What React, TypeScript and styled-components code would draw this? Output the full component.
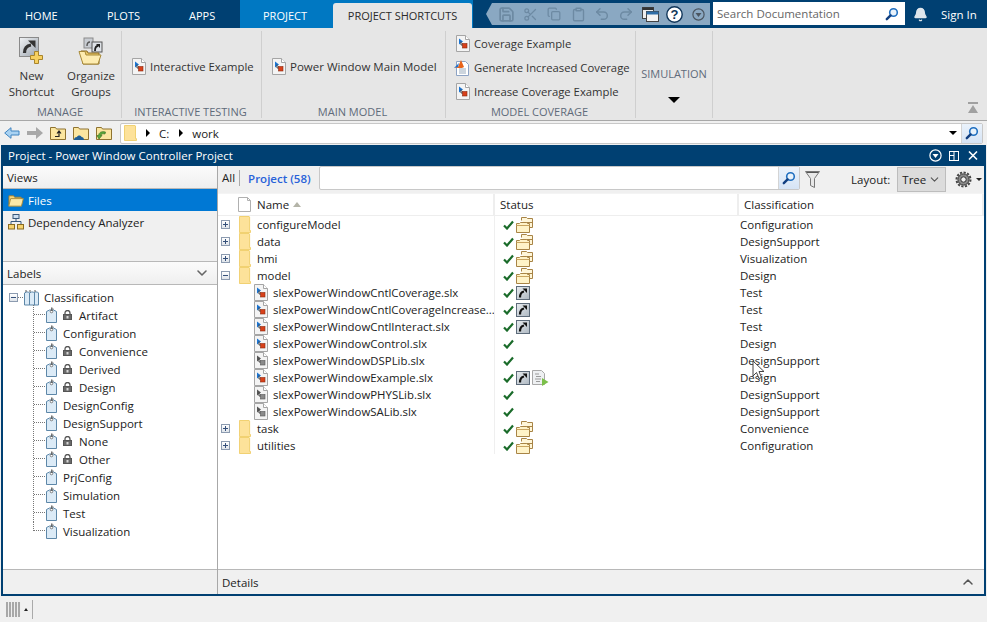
import React from "react";
import styled, { createGlobalStyle } from "styled-components";
import { Save, Scissors, Copy, Clipboard, Undo2, Redo2, Bell, ChevronDown, ChevronUp } from "lucide-react";

const Global = createGlobalStyle`
  html, body { margin: 0; padding: 0; width: 987px; height: 622px; overflow: hidden; background: #f0f0f0; }
  * { box-sizing: border-box; }
  body { font-family: "Open Sans", "Noto Sans", "Liberation Sans", sans-serif; font-size: 11.5px; color: #1c1c1c; }
`;

const Page = styled.div`
  position: relative; width: 987px; height: 622px; display: flex; flex-direction: column; overflow: hidden;
`;
const TopBar = styled.div`
  height: 28px; background: #004072; display: flex; align-items: stretch; padding-left: 1px; flex: none;
`;
const Tab = styled.div<{ $w: number; $pl: number }>`
  width: ${p => p.$w}px; padding: 8px 0 0 ${p => p.$pl}px; color: #fff; font-size: 11px; white-space: nowrap;
`;
const ContextTabs = styled.div`
  width: 233px; background: #0078c2; display: flex; align-items: flex-end; margin-right: 13px;
`;
const ContextLabel = styled.div`
  width: 93px; padding: 0 0 5px 23px; color: #fff; font-size: 11px;
`;
const ActiveTab = styled.div`
  width: 139px; height: 25px; background: #e6e6e6; border-radius: 3px 3px 0 0; color: #2a2a2a; font-size: 11px;
  display: flex; align-items: center; justify-content: center; white-space: nowrap;
`;
const Quick = styled.div`
  width: 224px; height: 22px; margin-top: 3px; background: #8aa8c2; display: flex; align-items: center;
  clip-path: polygon(6px 0, 100% 0, 100% 100%, 6px 100%, 0 50%); padding-left: 8px;
`;
const QuickSlot = styled.div`
  width: 24px; display: flex; justify-content: center; align-items: center; color: #6d8aa3; flex: none;
`;
const DocSearch = styled.div`
  width: 192px; height: 23px; margin: 2px 0 0 3px; background: #fff; display: flex; align-items: center;
  justify-content: space-between; padding: 0 6px 0 4px; color: #666;
`;
const BellSlot = styled.div`
  width: 31px; display: flex; justify-content: center; align-items: center; color: #dfe6ec;
`;
const SignIn = styled.div`
  color: #fff; padding: 7px 0 0 5px; white-space: nowrap;
`;
const Ribbon = styled.div`
  height: 93px; flex: none; background: #e6e6e6; border-bottom: 1px solid #a8a8a8; display: flex; padding: 3px 0 0 1px; position: relative;
`;
const Section = styled.div<{ $w: number }>`
  width: ${p => p.$w}px; height: 87px; border-right: 1px solid #cfcfcf; display: flex; flex-direction: column; flex: none;
`;
const SectionBody = styled.div`
  height: 73px; display: flex; flex: none;
`;
const SectionLabel = styled.div`
  height: 14px; text-align: center; color: #5f6b7a; font-size: 11px; line-height: 16px; white-space: nowrap; padding-right: 2px;
`;
const BigButton = styled.div<{ $w: number }>`
  width: ${p => p.$w}px; display: flex; flex-direction: column; align-items: center; text-align: center; line-height: 16px;
  padding-top: 6px; color: #333;
  svg { margin-bottom: 3px; flex: none; }
`;
const SideButton = styled.div`
  display: flex; align-items: center; gap: 4px; height: 24px; white-space: nowrap; color: #333; font-size: 11.3px;
`;
const MidButtonWrap = styled.div`
  display: flex; align-items: center; padding: 0 0 2px 10px;
`;
const ThreeStack = styled.div`
  display: flex; flex-direction: column; padding: 0 0 0 10px;
`;
const PowerLabel = styled.span`
  font-size: 11.5px;
`;
const SimBody = styled.div`
  height: 87px; display: flex; flex-direction: column; align-items: center; color: #5f6b7a; font-size: 11px; padding-top: 35px;
`;
const SimCaret = styled.div`
  margin-top: 16px; width: 0; height: 0; border-left: 6px solid transparent; border-right: 6px solid transparent; border-top: 6px solid #000;
`;
const Collapse = styled.div`
  position: absolute; right: 8px; bottom: 6px; display: flex; flex-direction: column; align-items: center;
`;
const AddressBar = styled.div`
  height: 24px; flex: none; background: #f0f0f0; display: flex; align-items: center; padding-left: 4px;
`;
const NavSlot = styled.div`
  width: 23px; display: flex; align-items: center;
`;
const AddressField = styled.div`
  width: 863px; height: 21px; margin-left: 1px; background: #fff; border: 1px solid #c8c8c8; border-radius: 2px; display: flex; align-items: center; padding-left: 3px; position: relative;
`;
const Crumb = styled.span`
  white-space: nowrap; color: #222; padding-right: 1px;
`;
const CrumbCaret = styled.span`
  width: 0; height: 0; border-top: 4px solid transparent; border-bottom: 4px solid transparent; border-left: 4px solid #000; margin: 0 9px;
`;
const AddrRight = styled.div`
  margin-left: auto; display: flex; align-items: center; height: 100%;
`;
const DownCaret = styled.span`
  width: 0; height: 0; border-left: 4px solid transparent; border-right: 4px solid transparent; border-top: 4px solid #000; margin-right: 4px;
`;
const SearchBtn = styled.div`
  width: 21px; height: 100%; background: linear-gradient(#eaf2fb, #d6e4f5); border-left: 1px solid #d4d4d4; display: flex; align-items: center; justify-content: center;
`;
const Window = styled.div`
  flex: 1; display: flex; flex-direction: column; background: #004072; padding: 0 2px 2px 2px; margin: 0 1px 0 1px; min-height: 0;
`;
const TitleBar = styled.div`
  height: 21px; flex: none; display: flex; align-items: center; color: #fff; padding-left: 5px; white-space: nowrap;
`;
const TitleIcons = styled.div`
  margin-left: auto; display: flex; align-items: center; gap: 5px; padding-right: 4px;
`;
const Panes = styled.div`
  flex: 1; display: grid; grid-template-columns: 215px 1fr; min-height: 0; background: #fff;
`;
const LeftPane = styled.div`
  border-right: 1px solid #a8a8a8; display: flex; flex-direction: column; min-height: 0;
`;
const PaneHead = styled.div`
  height: 23px; flex: none; padding: 0 7px 0 4px; display: flex; align-items: center; justify-content: space-between;
  background: linear-gradient(#fbfbfb, #efefef); border-bottom: 1px solid #b8b8b8; color: #222;
`;
const ViewList = styled.div`
  height: 73px; flex: none; background: #f0f0f0; border-bottom: 1px solid #b8b8b8;
`;
const ViewRow = styled.div<{ $sel?: boolean }>`
  height: 22px; display: flex; align-items: center; gap: 4px; padding-left: 5px;
  background: ${p => (p.$sel ? "#0078d4" : "transparent")}; color: ${p => (p.$sel ? "#fff" : "#222")};
`;
const LabelTree = styled.div`
  flex: 1; background: #fff; padding-top: 3px; min-height: 0;
`;
const TreeRoot = styled.div`
  height: 18px; display: flex; align-items: center; padding-left: 6px; color: #222;
`;
const RootLine = styled.span`
  width: 5px; border-top: 1px dotted #777;
`;
const TreeLeaf = styled.div<{ $last?: boolean }>`
  height: 18px; display: flex; align-items: center; padding-left: 43px; position: relative; color: #222;
  &::before { content: ""; position: absolute; left: 30px; top: -1px; height: ${p => (p.$last ? "10px" : "19px")}; border-left: 1px dotted #777; }
  &::after { content: ""; position: absolute; left: 31px; top: 8px; width: 11px; border-top: 1px dotted #777; }
`;
const LeafText = styled.span<{ $ml?: number }>`
  margin-left: ${p => p.$ml ?? 6}px;
`;
const LockSlot = styled.span`
  display: flex; margin: 0 1px 0 6px;
`;
const LeftFoot = styled.div`
  height: 25px; flex: none; background: #f0f0f0; border-top: 1px solid #b8b8b8;
`;
const RightPane = styled.div`
  display: flex; flex-direction: column; min-height: 0; position: relative; min-width: 0;
`;
const FilterBar = styled.div`
  height: 27px; flex: none; background: #f0f0f0; display: flex; align-items: center; padding: 0 0 3px 4px;
`;
const AllTab = styled.span`
  padding-right: 4px; border-right: 1px solid #aaa; line-height: 16px; color: #222;
`;
const ProjTab = styled.span`
  margin-left: 8px; color: #2962d9; font-weight: 600; white-space: nowrap; width: 71px;
`;
const FilterField = styled.div`
  width: 481px; height: 24px; background: #fff; border: 1px solid #c8c8c8; border-radius: 2px; display: flex; justify-content: flex-end;
`;
const FilterRight = styled.div`
  display: flex; align-items: center; margin-top: 3px;
`;
const FunnelSlot = styled.div`
  margin-left: 5px; display: flex; width: 46px;
`;
const LayoutLabel = styled.span`
  color: #222; white-space: nowrap; margin-right: 7px;
`;
const Select = styled.div`
  width: 49px; height: 25px; background: #dcdcdc; border: 1px solid #bdbdbd; display: flex; align-items: center; justify-content: space-between; padding: 0 4px 0 4px; color: #222;
`;
const GearSlot = styled.div`
  margin-left: 9px; display: flex; align-items: center; gap: 4px;
`;
const MiniCaret = styled.span`
  width: 0; height: 0; border-left: 3px solid transparent; border-right: 3px solid transparent; border-top: 3px solid #222;
`;
const TableHead = styled.div`
  height: 23px; flex: none; display: grid; grid-template-columns: 277px 244px 1fr; background: #fff; border-bottom: 1px solid #eee; border-top: 1px solid #f4f4f4; color: #222;
`;
const HeadCell = styled.div<{ $pl: number }>`
  display: flex; align-items: center; padding-left: ${p => p.$pl}px; border-right: 2px solid #eee; gap: 3px;
`;
const SortUp = styled.span`
  width: 0; height: 0; border-left: 4px solid transparent; border-right: 4px solid transparent; border-bottom: 5px solid #b4b4a8; margin-left: 1px;
`;
const TableBody = styled.div`
  flex: 1; min-height: 0;
`;
const Row = styled.div`
  height: 17px; display: grid; grid-template-columns: 277px 244px 1fr; color: #222; position: relative;
`;
const NameCell = styled.div`
  display: flex; align-items: center; padding-left: 3px; overflow: hidden; white-space: nowrap; border-right: 1px solid #efefef; font-size: 11.4px;
`;
const Expander = styled.span`
  width: 9px; height: 9px; border: 1px solid #8c9bb0; background: linear-gradient(#fff, #dfe4ea); position: relative; flex: none; margin-right: 9px;
  &::before { content: ""; position: absolute; left: 1px; top: 3px; width: 5px; height: 1px; background: #35507a; }
  &[data-open="false"]::after { content: ""; position: absolute; left: 3px; top: 1px; width: 1px; height: 5px; background: #35507a; }
`;
const TreeExpander = styled(Expander)`
  margin-right: 0;
`;
const FolderText = styled.span`
  margin-left: 6px;
`;
const FileIndent = styled.span`
  margin-left: 33px; display: flex; margin-right: 5px;
`;
const StatusCell = styled.div`
  display: flex; align-items: center; padding-left: 8px; gap: 1px;
`;
const ClassCell = styled.div`
  display: flex; align-items: center; padding-left: 1px;
`;
const Details = styled.div`
  height: 25px; flex: none; border-top: 1px solid #b8b8b8; background: #f0f0f0; display: flex; align-items: center; justify-content: space-between; padding: 0 8px 0 4px; color: #222;
`;
const StatusBar = styled.div`
  height: 26px; flex: none; background: #f0f0f0; display: flex; align-items: center; padding-left: 6px;
`;
const Grip = styled.div`
  width: 15px; height: 15px; background: repeating-linear-gradient(90deg, #a8a8a8 0 2px, #eeeeee 2px 3px);
`;
const GripCaret = styled.span`
  width: 0; height: 0; border-left: 2px solid transparent; border-right: 2px solid transparent; border-bottom: 3px solid #222; margin: 0 3px;
`;
const GripSep = styled.span`
  width: 1px; height: 19px; background: #aaa; margin-left: 1px;
`;
const Pointer = styled.svg`
  position: absolute; left: 752px; top: 360px;
`;

const Glass = () => (
  <svg width="14" height="14" viewBox="0 0 14 14">
    <circle cx="8.5" cy="5.5" r="3.8" fill="#e8f2fb" stroke="#1f6fc0" strokeWidth="1.6" />
    <path d="M5.6 8.4 1.8 12.2" stroke="#123f80" strokeWidth="2.4" strokeLinecap="round" />
  </svg>
);
const FlatFolder = ({ w = 13, h = 17 }: { w?: number; h?: number }) => (
  <svg width={w} height={h} viewBox="0 0 13 17" preserveAspectRatio="none" style={{ flex: "none" }}>
    <path d="M.5.5h10.5l.5.5v13.5h1v2H.5z" fill="#fde29a" stroke="#f0cf6e" />
  </svg>
);
const Check = () => (
  <svg width="11" height="10" viewBox="0 0 11 10" style={{ flex: "none" }}>
    <path d="M1 5.5 4 8.5 10 1.5" fill="none" stroke="#1a6b2a" strokeWidth="2.2" />
  </svg>
);
const StatusFolder = () => (
  <svg width="17" height="16" viewBox="0 0 17 16" style={{ flex: "none", marginLeft: 1 }}>
    <path d="M5.5 3.5V.5h5l1 1h5v9h-3" fill="#fff6d8" stroke="#a88446" />
    <path d="M7 5.5h9.5" stroke="#a88446" />
    <path d="M.5 15.5v-9h3l1-1h6l1 1h2v9z" fill="#fff3c8" stroke="#a88446" />
    <path d="M.5 8.5h13" stroke="#c9a560" />
  </svg>
);
const Shortcut = ({ size = 14 }: { size?: number }) => (
  <svg width={size} height={size} viewBox="0 0 14 14" style={{ flex: "none", marginLeft: 1 }}>
    <defs><linearGradient id="sc" x1="0" y1="0" x2="1" y2="1"><stop offset="0" stopColor="#e8ecef" /><stop offset="1" stopColor="#aeb8c2" /></linearGradient></defs>
    <rect x=".5" y=".5" width="13" height="13" fill="url(#sc)" stroke="#5d6b7a" />
    <path d="M4 11.5C4 8 5.5 6 8 5.5" fill="none" stroke="#111" strokeWidth="2.2" />
    <path d="M6.5 2.5H11V7z" fill="#111" />
  </svg>
);
const ModelFile = ({ gray }: { gray?: boolean }) => (
  <svg width="14" height="17" viewBox="0 0 14 17" style={{ flex: "none" }}>
    <path d="M.5.5h9l4 4v12H.5z" fill="#f4f4f4" stroke="#a5a5a5" />
    <path d="M9.5.5v4h4" fill="#fff" stroke="#a5a5a5" />
    <path d="M3 3.5v6l4-3z" fill={gray ? "#555" : "#1a74d2"} />
    <path d="M5 6.5v3.5h2" fill="none" stroke="#444" />
    <rect x="6.5" y="8.5" width="4.5" height="4.5" fill={gray ? "#8a8a8a" : "#d8401a"} stroke={gray ? "#555" : "#8a2a10"} strokeWidth=".6" />
  </svg>
);
const DocGenIcon = () => (
  <svg width="17" height="17" viewBox="0 0 17 17" style={{ flex: "none", margin: "0 -1px 0 -2px" }}>
    <path d="M2.5 2.5h9l3 3v11h-12z" fill="#fff" stroke="#8da3c4" />
    <path d="M5 10h7M5 12h7M5 14h7" stroke="#9ab" />
    <path d="M0 9l4-1 3-7 3 7-2 1z" fill="#e8641a" />
    <path d="M0 9l4-1 1-4z" fill="#1a74d2" />
  </svg>
);
const Tag = () => (
  <svg width="11" height="16" viewBox="0 0 11 16" style={{ flex: "none" }}>
    <path d="M.5 4.5 3.5 3h4l3 1.5v11H.5z" fill="#dcebf7" stroke="#5d87a8" />
    <circle cx="5.5" cy="4.5" r="1.3" fill="#fff" stroke="#555" strokeWidth=".7" />
    <path d="M5.5 4V.7" stroke="#555" strokeWidth=".8" />
    <path d="M5.5.7c2 0 2 2.5.5 3" fill="none" stroke="#555" strokeWidth=".7" />
  </svg>
);
const TagStack = () => (
  <svg width="16" height="17" viewBox="0 0 16 17" style={{ flex: "none" }}>
    {[10, 6, 1].map(x => (
      <path key={x} d={`M${x + .5} 4l2-1h2l1 1v12h-5z`} fill="#dcebf7" stroke="#5d87a8" />
    ))}
    <path d="M3 3V1M7 3V1M12 3V1" stroke="#555" />
  </svg>
);
const Lock = () => (
  <svg width="9" height="10" viewBox="0 0 9 10" style={{ flex: "none" }}>
    <path d="M2 5V3a2.5 2.5 0 0 1 5 0v2" fill="none" stroke="#555" strokeWidth="1.3" />
    <rect x=".5" y="4.5" width="8" height="5" fill="#6a6a6a" stroke="#555" />
    <rect x="3.5" y="6" width="2" height="2.5" fill="#d8d8d8" />
  </svg>
);
const OpenFolderView = () => (
  <svg width="16" height="13" viewBox="0 0 17 13" style={{ flex: "none" }}>
    <path d="M1 12V1.5h5l1 1.5h7v2" fill="#f7d77c" stroke="#9a7a30" />
    <path d="M.8 12.5l2-8h13.5l-2 8z" fill="#fde9a8" stroke="#a88a38" />
  </svg>
);
const Hierarchy = () => (
  <svg width="16" height="16" viewBox="0 0 16 16" style={{ flex: "none" }}>
    <rect x="5" y=".5" width="6" height="4" fill="#cfe0f2" stroke="#39587c" />
    <path d="M8 4.5v3M3 10V7.5h10V10" fill="none" stroke="#39587c" />
    <rect x=".5" y="10.5" width="6" height="4.5" fill="#f6d26e" stroke="#8a6a20" />
    <rect x="9.5" y="10.5" width="6" height="4.5" fill="#f6d26e" stroke="#8a6a20" />
  </svg>
);
const NewShortcutIcon = () => (
  <svg width="26" height="28" viewBox="0 0 26 28">
    <defs><linearGradient id="ns" x1="0" y1="0" x2="1" y2="1"><stop offset="0" stopColor="#f2f4f6" /><stop offset="1" stopColor="#9aa3ad" /></linearGradient></defs>
    <rect x=".5" y=".5" width="19" height="19" fill="url(#ns)" stroke="#8a8a8a" />
    <path d="M5.5 16C5.5 11 8 8.5 12 8" fill="none" stroke="#333" strokeWidth="3.2" />
    <path d="M9 3.5h7.5V11z" fill="#333" />
    <path d="M15.5 14.5h4v4h4v4h-4v4h-4v-4h-4v-4h4z" fill="#f7d060" stroke="#a8842c" />
  </svg>
);
const OrganizeIcon = () => (
  <svg width="26" height="28" viewBox="0 0 26 28">
    <rect x="6" y="1" width="9" height="10" fill="#c8ccd2" stroke="#8a8a8a" />
    <path d="M9 9c0-3 1-4 3-4" fill="none" stroke="#555" strokeWidth="1.4" />
    <rect x="14" y="5" width="10" height="10" fill="#dfe3e8" stroke="#555" />
    <path d="M17 14c0-3 1-5 3-5" fill="none" stroke="#222" strokeWidth="1.8" />
    <path d="M18 7h4v4z" fill="#222" />
    <path d="M3 14h6l1 2h11v11H5z" fill="#e8c868" stroke="#8a6a20" />
    <path d="M1 14.5 5 27h15l3-9H8l-1-3.5z" fill="#fdecb0" stroke="#a88a38" />
  </svg>
);
const BackArrow = ({ gray }: { gray?: boolean }) => (
  <svg width="16" height="12" viewBox="0 0 16 12">
    {gray
      ? <path d="M16 6 9 0v4H0v4h9v4z" fill="#a8a8a8" />
      : <path d="M.7 6 7 .7V4h8v4H7v3.3z" fill="#a9d2f2" stroke="#3f84c0" />}
  </svg>
);
const NavFolder = ({ kind }: { kind: "up" | "cloud" | "green" }) => (
  <svg width="16" height="14" viewBox="0 0 16 14">
    <path d="M.5 13.5V1.5h5l1 1.5h9v10.5z" fill="#fbe6a0" stroke="#8f7330" />
    {kind === "up" && <path d="M5 10.5h4V6M7 7.5 9 5l2 2.5" fill="none" stroke="#222" strokeWidth="1.2" />}
    {kind === "cloud" && <path d="M1 14c0-2 1-3 3-3 .5-2 4-2 4.5 0 1.5 0 2.5 1 2.5 3z" fill="#1f5f96" />}
    {kind === "green" && <path d="M3 13 1 9.5h1.5C3 6 6 5 9.5 6L9 8c-2-.5-4 0-4.5 1.5H6z" fill="#5aa83a" stroke="#2f6a1e" strokeWidth=".6" />}
  </svg>
);
const HelpIcon = () => (
  <svg width="17" height="17" viewBox="0 0 17 17">
    <circle cx="8.5" cy="8.5" r="7.7" fill="#fff" stroke="#10365a" strokeWidth="1.4" />
    <text x="8.5" y="13" textAnchor="middle" fontFamily="Liberation Sans" fontWeight="700" fontSize="13" fill="#10365a">?</text>
  </svg>
);
const WindowsIcon = () => (
  <svg width="17" height="15" viewBox="0 0 17 15">
    <rect x=".5" y=".5" width="11" height="11" fill="#eee" stroke="#444" />
    <rect x=".5" y=".5" width="11" height="2.5" fill="#333" />
    <rect x="4.5" y="4.5" width="12" height="10" fill="#f4f4f4" stroke="#444" />
    <rect x="4.5" y="4.5" width="12" height="3" fill="#2f6ea8" />
  </svg>
);
const CircleDown = ({ c, s = 13 }: { c: string; s?: number }) => (
  <svg width={s} height={s} viewBox="0 0 13 13">
    <circle cx="6.5" cy="6.5" r="5.6" fill="none" stroke={c} strokeWidth="1.2" />
    <path d="M3.5 5h6l-3 4z" fill={c} />
  </svg>
);
const Funnel = () => (
  <svg width="15" height="18" viewBox="0 0 15 18">
    <path d="M.5.5h14l-5 7v9l-4-2V7.5z" fill="#e8e8e8" stroke="#777" />
    <path d="M1.5 1.5h12" stroke="#555" />
  </svg>
);
const Gear = () => (
  <svg width="17" height="17" viewBox="0 0 17 17">
    <circle cx="8.5" cy="8.5" r="5.6" fill="#8a8a8a" stroke="#333" />
    <circle cx="8.5" cy="8.5" r="2.7" fill="#f0f0f0" stroke="#333" />
    <circle cx="8.5" cy="8.5" r="7" fill="none" stroke="#444" strokeWidth="2" strokeDasharray="2.2 1.45" />
  </svg>
);
const DocPlay = () => (
  <svg width="17" height="16" viewBox="0 0 17 16" style={{ flex: "none", marginLeft: 1 }}>
    <path d="M.5.5h9l3 3v11H.5z" fill="#eef0f2" stroke="#a8a8a8" />
    <path d="M3 4h4M4 6.5h5M3 9h6M4 11.5h4" stroke="#9a9a9a" />
    <path d="M10 8l6.5 4-6.5 4z" fill="#7cc04a" />
  </svg>
);

type Item = { name: string; st: string[]; cls: string; gray?: boolean; open?: boolean };
const rows: Item[] = [
  { name: "configureModel", st: ["f"], cls: "Configuration" },
  { name: "data", st: ["f"], cls: "DesignSupport" },
  { name: "hmi", st: ["f"], cls: "Visualization" },
  { name: "model", st: ["f"], cls: "Design", open: true },
  { name: "slexPowerWindowCntlCoverage.slx", st: ["s"], cls: "Test" },
  { name: "slexPowerWindowCntlCoverageIncrease...", st: ["s"], cls: "Test" },
  { name: "slexPowerWindowCntlInteract.slx", st: ["s"], cls: "Test" },
  { name: "slexPowerWindowControl.slx", st: [], cls: "Design" },
  { name: "slexPowerWindowDSPLib.slx", st: [], cls: "DesignSupport", gray: true },
  { name: "slexPowerWindowExample.slx", st: ["s", "d"], cls: "Design" },
  { name: "slexPowerWindowPHYSLib.slx", st: [], cls: "DesignSupport", gray: true },
  { name: "slexPowerWindowSALib.slx", st: [], cls: "DesignSupport", gray: true },
  { name: "task", st: ["f"], cls: "Convenience" },
  { name: "utilities", st: ["f"], cls: "Configuration" },
];
const labels: [string, boolean][] = [
  ["Artifact", true], ["Configuration", false], ["Convenience", true], ["Derived", true], ["Design", true],
  ["DesignConfig", false], ["DesignSupport", false], ["None", true], ["Other", true], ["PrjConfig", false],
  ["Simulation", false], ["Test", false], ["Visualization", false],
];

export default function App() {
  return (
    <Page>
      <Global />
      <TopBar>
        <Tab $w={82} $pl={24}>HOME</Tab>
        <Tab $w={82} $pl={24}>PLOTS</Tab>
        <Tab $w={75} $pl={24}>APPS</Tab>
        <ContextTabs>
          <ContextLabel>PROJECT</ContextLabel>
          <ActiveTab>PROJECT SHORTCUTS</ActiveTab>
        </ContextTabs>
        <Quick>
          <QuickSlot><Save size={17} strokeWidth={2.4} /></QuickSlot>
          <QuickSlot><Scissors size={15} /></QuickSlot>
          <QuickSlot><Copy size={14} strokeWidth={2.2} /></QuickSlot>
          <QuickSlot><Clipboard size={15} strokeWidth={2.2} /></QuickSlot>
          <QuickSlot><Undo2 size={16} strokeWidth={2.2} /></QuickSlot>
          <QuickSlot><Redo2 size={16} strokeWidth={2.2} /></QuickSlot>
          <QuickSlot><WindowsIcon /></QuickSlot>
          <QuickSlot><HelpIcon /></QuickSlot>
          <QuickSlot><CircleDown c="#4a5560" /></QuickSlot>
        </Quick>
        <DocSearch>Search Documentation<Glass /></DocSearch>
        <BellSlot><Bell size={15} fill="#dfe6ec" /></BellSlot>
        <SignIn>Sign In</SignIn>
      </TopBar>
      <Ribbon>
        <Section $w={121}>
          <SectionBody>
            <BigButton $w={61}><NewShortcutIcon />New<br />Shortcut</BigButton>
            <BigButton $w={58}><OrganizeIcon />Organize<br />Groups</BigButton>
          </SectionBody>
          <SectionLabel>MANAGE</SectionLabel>
        </Section>
        <Section $w={140}>
          <SectionBody><MidButtonWrap><SideButton><ModelFile />Interactive Example</SideButton></MidButtonWrap></SectionBody>
          <SectionLabel>INTERACTIVE TESTING</SectionLabel>
        </Section>
        <Section $w={184}>
          <SectionBody><MidButtonWrap><SideButton><ModelFile /><PowerLabel>Power Window Main Model</PowerLabel></SideButton></MidButtonWrap></SectionBody>
          <SectionLabel>MAIN MODEL</SectionLabel>
        </Section>
        <Section $w={190}>
          <SectionBody>
            <ThreeStack>
              <SideButton><ModelFile />Coverage Example</SideButton>
              <SideButton><DocGenIcon />Generate Increased Coverage</SideButton>
              <SideButton><ModelFile />Increase Coverage Example</SideButton>
            </ThreeStack>
          </SectionBody>
          <SectionLabel>MODEL COVERAGE</SectionLabel>
        </Section>
        <Section $w={77}>
          <SimBody>SIMULATION<SimCaret /></SimBody>
        </Section>
        <Collapse>
          <svg width="12" height="12" viewBox="0 0 12 12"><rect x="1" y="0" width="10" height="2" fill="#a0a0a0" /><path d="M6 3 1 11h10z" fill="#a0a0a0" /></svg>
        </Collapse>
      </Ribbon>
      <AddressBar>
        <NavSlot><BackArrow /></NavSlot>
        <NavSlot><BackArrow gray /></NavSlot>
        <NavSlot><NavFolder kind="up" /></NavSlot>
        <NavSlot><NavFolder kind="cloud" /></NavSlot>
        <NavSlot><NavFolder kind="green" /></NavSlot>
        <AddressField>
          <FlatFolder w={13} h={16} />
          <CrumbCaret />
          <Crumb>C:</Crumb>
          <CrumbCaret />
          <Crumb>work</Crumb>
          <AddrRight><DownCaret /><SearchBtn><Glass /></SearchBtn></AddrRight>
        </AddressField>
      </AddressBar>
      <Window>
        <TitleBar>
          Project - Power Window Controller Project
          <TitleIcons>
            <CircleDown c="#fff" />
            <svg width="14" height="12" viewBox="0 0 14 12"><rect x="2.5" y="1.5" width="9" height="9" fill="none" stroke="#fff" /><path d="M7 1.5v9M2.5 5.5H7" stroke="#fff" /></svg>
            <svg width="14" height="12" viewBox="0 0 14 12"><path d="M3 1.5l8 8M11 1.5l-8 8" stroke="#fff" strokeWidth="1.6" /></svg>
          </TitleIcons>
        </TitleBar>
        <Panes>
          <LeftPane>
            <PaneHead>Views</PaneHead>
            <ViewList>
              <ViewRow $sel><OpenFolderView />Files</ViewRow>
              <ViewRow><Hierarchy />Dependency Analyzer</ViewRow>
            </ViewList>
            <PaneHead>Labels<ChevronDown size={16} color="#666" strokeWidth={2.4} /></PaneHead>
            <LabelTree>
              <TreeRoot>
                <TreeExpander data-open="true" />
                <RootLine />
                <TagStack />
                <LeafText $ml={5}>Classification</LeafText>
              </TreeRoot>
              {labels.map(([l, locked], i) => (
                <TreeLeaf key={l} $last={i === labels.length - 1}>
                  <Tag />
                  {locked && <LockSlot><Lock /></LockSlot>}
                  <LeafText>{l}</LeafText>
                </TreeLeaf>
              ))}
            </LabelTree>
            <LeftFoot />
          </LeftPane>
          <RightPane>
            <FilterBar>
              <AllTab>All</AllTab>
              <ProjTab>Project (58)</ProjTab>
              <FilterField><SearchBtn><Glass /></SearchBtn></FilterField>
              <FilterRight>
                <FunnelSlot><Funnel /></FunnelSlot>
                <LayoutLabel>Layout:</LayoutLabel>
                <Select>Tree<ChevronDown size={13} color="#555" /></Select>
                <GearSlot><Gear /><MiniCaret /></GearSlot>
              </FilterRight>
            </FilterBar>
            <TableHead>
              <HeadCell $pl={20}>
                <svg width="13" height="15" viewBox="0 0 13 15" style={{ marginRight: 3 }}><path d="M.5.5h9l3 3v11H.5z" fill="#fff" stroke="#b0b0b0" /><path d="M9.5.5v3h3" fill="none" stroke="#b0b0b0" /></svg>
                Name<SortUp />
              </HeadCell>
              <HeadCell $pl={5}>Status</HeadCell>
              <HeadCell $pl={5}>Classification</HeadCell>
            </TableHead>
            <TableBody>
              {rows.map(r => {
                const isFile = r.name.startsWith("slex");
                return (
                  <Row key={r.name}>
                    <NameCell>
                      {isFile ? (
                        <><FileIndent><ModelFile gray={r.gray} /></FileIndent>{r.name}</>
                      ) : (
                        <>
                          <Expander data-open={r.open ? "true" : "false"} />
                          <FlatFolder w={12} h={17} />
                          <FolderText>{r.name}</FolderText>
                        </>
                      )}
                    </NameCell>
                    <StatusCell>
                      <Check />
                      {r.st.map(s => s === "f" ? <StatusFolder key={s} /> : s === "s" ? <Shortcut key={s} /> : <DocPlay key={s} />)}
                    </StatusCell>
                    <ClassCell>{r.cls}</ClassCell>
                  </Row>
                );
              })}
            </TableBody>
            <Details>Details<ChevronUp size={16} color="#555" strokeWidth={2.2} /></Details>
          </RightPane>
        </Panes>
      </Window>
      <StatusBar>
        <Grip />
        <GripCaret />
        <GripSep />
      </StatusBar>
      <Pointer width="13" height="21" viewBox="0 0 13 21">
        <path d="M1 1v15l3.5-3.5 2.5 6 2.5-1-2.5-6h5z" fill="#fff" stroke="#444" />
      </Pointer>
    </Page>
  );
}
